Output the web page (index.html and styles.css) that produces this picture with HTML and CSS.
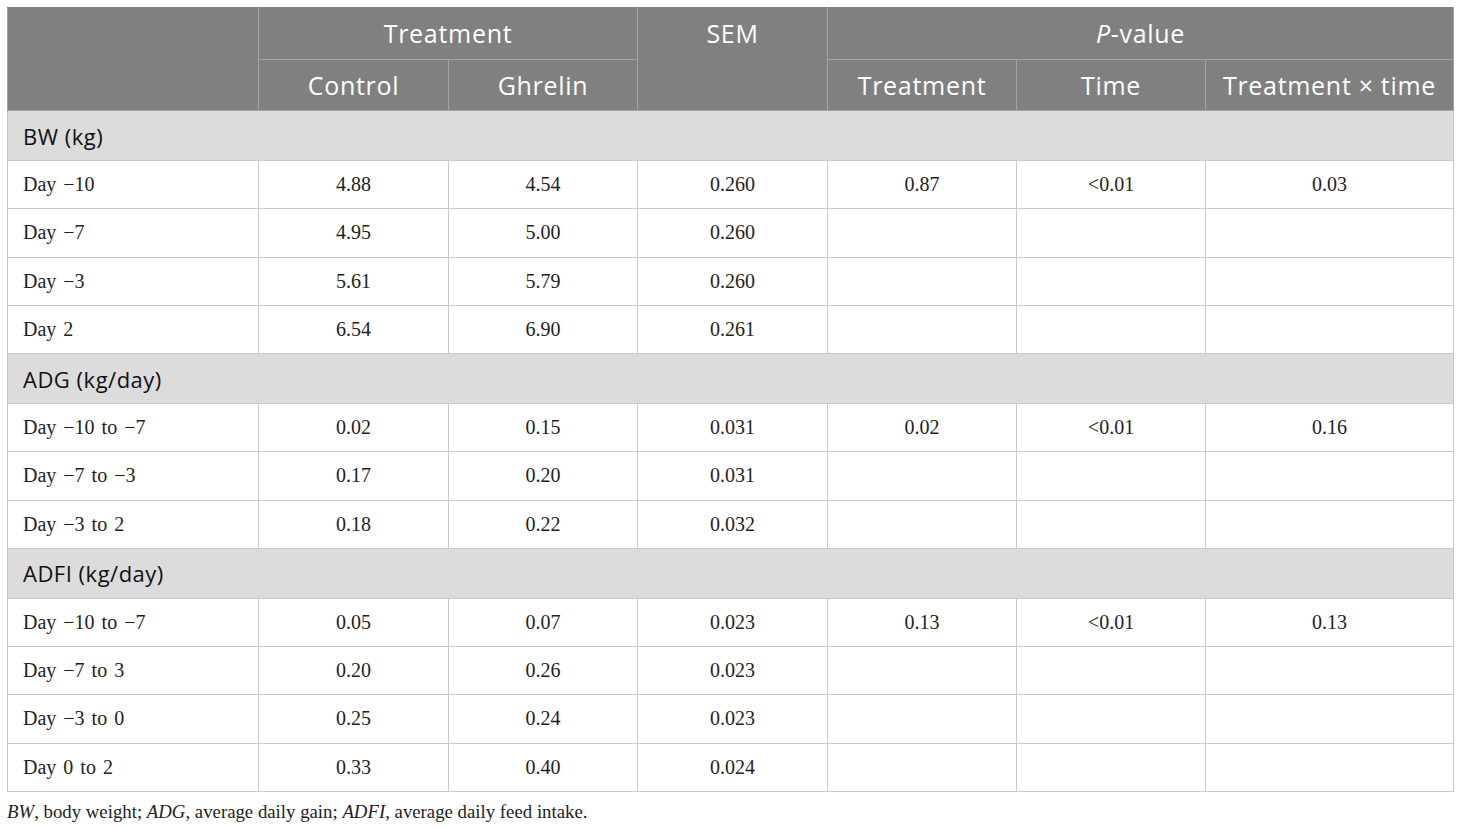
FILE: index.html
```html
<!DOCTYPE html>
<html lang="en">
<head>
    <meta charset="UTF-8">
    <title>Table</title>
    <link rel="stylesheet" href="styles.css">
</head>
<body>
    <table class="data-table">
        <colgroup>
            <col class="c-label">
            <col class="c-wide"><col class="c-narrow"><col class="c-wide">
            <col class="c-narrow"><col class="c-narrow"><col class="c-last">
        </colgroup>
        <thead>
            <tr>
                <th rowspan="2"></th>
                <th colspan="2">Treatment</th>
                <th rowspan="2" class="top">SEM</th>
                <th colspan="3"><i>P</i>-value</th>
            </tr>
            <tr>
                <th>Control</th>
                <th>Ghrelin</th>
                <th>Treatment</th>
                <th>Time</th>
                <th>Treatment × time</th>
            </tr>
        </thead>
        <tbody>
            <tr class="group"><td colspan="7">BW (kg)</td></tr>
            <tr><td>Day −10</td><td>4.88</td><td>4.54</td><td>0.260</td><td>0.87</td><td>&lt;0.01</td><td>0.03</td></tr>
            <tr><td>Day −7</td><td>4.95</td><td>5.00</td><td>0.260</td><td></td><td></td><td></td></tr>
            <tr><td>Day −3</td><td>5.61</td><td>5.79</td><td>0.260</td><td></td><td></td><td></td></tr>
            <tr><td>Day 2</td><td>6.54</td><td>6.90</td><td>0.261</td><td></td><td></td><td></td></tr>
            <tr class="group"><td colspan="7">ADG (kg/day)</td></tr>
            <tr><td>Day −10 to −7</td><td>0.02</td><td>0.15</td><td>0.031</td><td>0.02</td><td>&lt;0.01</td><td>0.16</td></tr>
            <tr><td>Day −7 to −3</td><td>0.17</td><td>0.20</td><td>0.031</td><td></td><td></td><td></td></tr>
            <tr><td>Day −3 to 2</td><td>0.18</td><td>0.22</td><td>0.032</td><td></td><td></td><td></td></tr>
            <tr class="group"><td colspan="7">ADFI (kg/day)</td></tr>
            <tr><td>Day −10 to −7</td><td>0.05</td><td>0.07</td><td>0.023</td><td>0.13</td><td>&lt;0.01</td><td>0.13</td></tr>
            <tr><td>Day −7 to 3</td><td>0.20</td><td>0.26</td><td>0.023</td><td></td><td></td><td></td></tr>
            <tr><td>Day −3 to 0</td><td>0.25</td><td>0.24</td><td>0.023</td><td></td><td></td><td></td></tr>
            <tr><td>Day 0 to 2</td><td>0.33</td><td>0.40</td><td>0.024</td><td></td><td></td><td></td></tr>
        </tbody>
    </table>
    <p class="note"><i>BW</i>, body weight; <i>ADG</i>, average daily gain; <i>ADFI</i>, average daily feed intake.</p>
</body>
</html>
```

FILE: styles.css
```css
* {
    margin: 0;
    padding: 0;
    box-sizing: border-box;
}

body {
    padding: 7px;
    background: #fff;
    font-family: 'Liberation Serif', serif;
    color: #1e1e1e;
}

.data-table {
    width: 1446px;
    border-collapse: collapse;
    table-layout: fixed;
}

.c-label { width: 251px; }
.c-wide { width: 190px; }
.c-narrow { width: 189px; }
.c-last { width: 248px; }

/* Header */
.data-table th {
    background-color: #808080;
    color: #fff;
    font-family: 'Open Sans', sans-serif;
    font-weight: 400;
    font-size: 25px;
    letter-spacing: 0.7px;
    height: 51.5px;
    border: 1px solid #a3a3a3;
    text-align: center;
    vertical-align: middle;
}

.data-table th.top {
    vertical-align: top;
    padding-top: 8px;
}

.data-table thead tr:first-child th {
    border-top-color: #808080;
}

/* Body */
.data-table td {
    height: 48.25px;
    border: 1px solid #c9c9c9;
    font-size: 20px;
    word-spacing: 2px;
    text-align: center;
    vertical-align: middle;
}

.data-table td:first-child {
    text-align: left;
    padding-left: 15px;
}

.data-table tr.group td {
    height: 50px;
    background-color: #dcdcdc;
    font-family: 'Open Sans', sans-serif;
    font-size: 22px;
    letter-spacing: 0.5px;
    word-spacing: 0;
    color: #111;
}

.note {
    margin-top: 9px;
    font-size: 18.8px;
    color: #1e1e1e;
}
```
